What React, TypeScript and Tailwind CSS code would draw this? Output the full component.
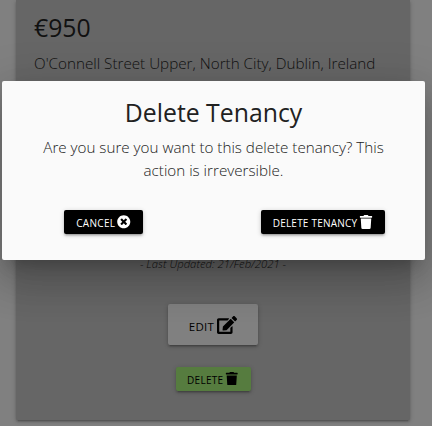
import { FaTimesCircle, FaTrash, FaEdit } from "react-icons/fa";

const buttonShadow =
  "shadow-[0_2px_2px_0_rgba(0,0,0,0.14),0_3px_1px_-2px_rgba(0,0,0,0.12),0_1px_5px_0_rgba(0,0,0,0.2)]";

function TenancyCard() {
  return (
    <section className="ml-4 flex h-[420px] w-[394px] flex-col rounded-b-xs bg-[#666666] shadow-[0_2px_2px_0_rgba(0,0,0,0.14),0_3px_1px_-2px_rgba(0,0,0,0.12),0_1px_5px_0_rgba(0,0,0,0.2)]">
      <div className="px-[18px] pt-[9px]">
        <h2 className="text-[24.8px] leading-9 text-[#111111]">€950</h2>
        <p className="mt-[7px] text-[15.22px] leading-[23px] font-light whitespace-nowrap text-[#111111]">
          O'Connell Street Upper, North City, Dublin, Ireland
        </p>
      </div>
      <p className="mt-auto text-center text-[11.3px] leading-4 font-light text-[#111111] italic">
        - Last Updated: 21/Feb/2021 -
      </p>
      <div className="mt-8 mb-[29.5px] flex flex-col items-center gap-[21.5px]">
        <button className={`flex h-[41px] w-[90px] items-center justify-center gap-[3px] rounded-xs bg-[#808080] text-black ${buttonShadow}`}>
          <span className="pt-[5px] text-[11.5px] tracking-[0.3px]">EDIT</span>
          <FaEdit className="size-5" />
        </button>
        <button className={`flex h-6 w-[75px] items-center justify-center rounded-xs bg-[#567c3f] text-black ${buttonShadow}`}>
          <span className="pt-[3px] text-[10px] tracking-[0.3px]">DELETE</span>
          <FaTrash className="ml-[2px] size-[13.5px]" />
        </button>
      </div>
    </section>
  );
}

function DeleteDialog() {
  return (
    <div
      role="dialog"
      className="absolute top-[81px] left-[2px] flex h-[179px] w-[423px] flex-col rounded-[2px] bg-[#fafafa] pt-[13px] text-center shadow-[0_24px_38px_3px_rgba(0,0,0,0.14),0_9px_46px_8px_rgba(0,0,0,0.12),0_11px_15px_-7px_rgba(0,0,0,0.2)]"
    >
      <h1 className="text-[24.8px] leading-9 text-[#212121]">Delete Tenancy</h1>
      <p className="mt-[6px] px-9 text-[15.2px] leading-[23px] font-light text-[#212121]">
        Are you sure you want to this delete tenancy? This action is irreversible.
      </p>
      <div className="mt-[28px] flex justify-between pr-[40px] pl-[62px]">
        <button className={`flex h-6 w-[79px] items-center justify-center rounded-xs bg-black text-white ${buttonShadow}`}>
          <span className="pt-[3px] text-[10px] font-medium tracking-[0.3px]">CANCEL</span>
          <FaTimesCircle className="ml-[2px] size-[13.5px]" />
        </button>
        <button className={`flex h-6 w-[124px] items-center justify-center rounded-xs bg-black text-white ${buttonShadow}`}>
          <span className="pt-[3px] text-[10px] font-medium tracking-[0.22px]">DELETE TENANCY</span>
          <FaTrash className="ml-[2px] size-[14px]" />
        </button>
      </div>
    </div>
  );
}

export default function App() {
  return (
    <main className="relative h-[426px] w-[432px] overflow-hidden bg-[#808080] font-['Open_Sans','Noto_Sans',sans-serif]">
      <TenancyCard />
      <DeleteDialog />
    </main>
  );
}
